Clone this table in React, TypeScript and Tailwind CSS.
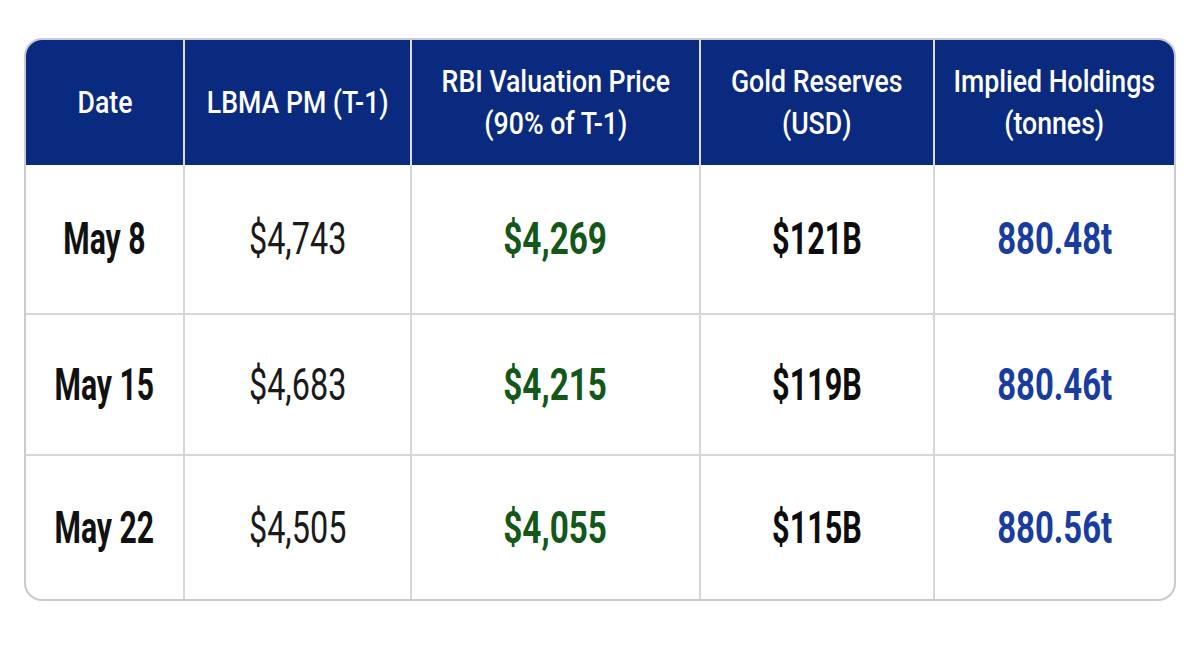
import React from 'react';

const font = '"Roboto", "DejaVu Sans", sans-serif';

type Row = {
  date: string;
  lbma: string;
  rbi: string;
  reserves: string;
  holdings: string;
  h: string;
};

const rows: Row[] = [
  { date: 'May 8', lbma: '$4,743', rbi: '$4,269', reserves: '$121B', holdings: '880.48t', h: 'h-[148px]' },
  { date: 'May 15', lbma: '$4,683', rbi: '$4,215', reserves: '$119B', holdings: '880.46t', h: 'h-[141px]' },
  { date: 'May 22', lbma: '$4,505', rbi: '$4,055', reserves: '$115B', holdings: '880.56t', h: 'h-[145px]' },
];

const cols = 'grid grid-cols-[157px_227px_289px_234px_241px]';
const cell = 'flex items-center justify-center text-center';
const sep = 'border-l-2 border-[#d4d6db]';
const headSep = 'border-l-2 border-[#d9dce6]';
// the reference uses a narrow face, so squeeze Roboto horizontally
const headText = 'inline-block scale-x-[0.86]';

const App: React.FC = () => {
  return (
    <div className="w-[1200px] h-[658px] bg-white pt-[38px] pl-[24px]" style={{ fontFamily: font }}>
      <div className="w-[1152px] rounded-[18px] border-2 border-[#c9cbd1] overflow-hidden bg-white">
        {/* header */}
        <div className={`${cols} h-[125px] bg-[#0a2a7f] text-white text-[31px] leading-[42px] font-medium`}>
          <div className={cell}>
            <span className={headText}>Date</span>
          </div>
          <div className={`${cell} ${headSep}`}>
            <span className={headText}>LBMA PM (T-1)</span>
          </div>
          <div className={`${cell} ${headSep}`}>
            <span className={headText}>
              RBI Valuation Price<br />(90% of T-1)
            </span>
          </div>
          <div className={`${cell} ${headSep}`}>
            <span className={headText}>
              Gold Reserves<br />(USD)
            </span>
          </div>
          <div className={`${cell} ${headSep}`}>
            <span className={headText}>
              Implied Holdings<br />(tonnes)
            </span>
          </div>
        </div>

        {/* body */}
        {rows.map((r, i) => (
          <div key={r.date} className={`${cols} ${r.h} text-[45px] ${i > 0 ? 'border-t-2 border-[#d4d6db]' : ''}`}>
            <div className={`${cell} font-bold text-[#111]`}>
              <span className="inline-block scale-x-[0.67]">{r.date}</span>
            </div>
            <div className={`${cell} ${sep} text-[#1a1a1a]`}>
              <span className="inline-block scale-x-[0.72]">{r.lbma}</span>
            </div>
            <div className={`${cell} ${sep} font-bold text-[#135819]`}>
              <span className="inline-block scale-x-[0.74]">{r.rbi}</span>
            </div>
            <div className={`${cell} ${sep} font-bold text-[#0d0d0d]`}>
              <span className="inline-block scale-x-[0.68]">{r.reserves}</span>
            </div>
            <div className={`${cell} ${sep} font-bold text-[#183ca0]`}>
              <span className="inline-block scale-x-[0.73]">{r.holdings}</span>
            </div>
          </div>
        ))}
      </div>
    </div>
  );
};

export default App;
